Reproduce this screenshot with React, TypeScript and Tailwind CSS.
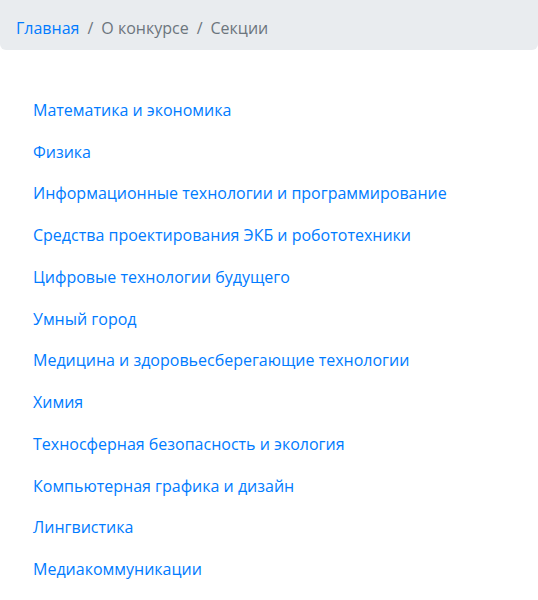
const sections = [
  "Математика и экономика",
  "Физика",
  "Информационные технологии и программирование",
  "Средства проектирования ЭКБ и робототехники",
  "Цифровые технологии будущего",
  "Умный город",
  "Медицина и здоровьесберегающие технологии",
  "Химия",
  "Техносферная безопасность и экология",
  "Компьютерная графика и дизайн",
  "Лингвистика",
  "Медиакоммуникации",
];

const App = () => {
  return (
    <div
      className="w-[538px] h-[600px] bg-white overflow-hidden"
      style={{ fontFamily: '"Open Sans", "Noto Sans", sans-serif' }}
    >
      <nav className="h-[50px] bg-[#e9ecef] rounded-b-[6px] px-4 pt-[5px] flex items-center text-[16px] text-[#6c757d]">
        <a href="#" className="text-[#007bff]">
          Главная
        </a>
        <span className="px-2">/</span>
        <span>О конкурсе</span>
        <span className="px-2">/</span>
        <span>Секции</span>
      </nav>
      <ul className="mt-[39px] pl-[33px] flex flex-col">
        {sections.map((name) => (
          <li key={name} className="h-[41.75px] flex items-center">
            <a href="#" className="text-[16px] text-[#007bff]">
              {name}
            </a>
          </li>
        ))}
      </ul>
    </div>
  );
};

export default App;
